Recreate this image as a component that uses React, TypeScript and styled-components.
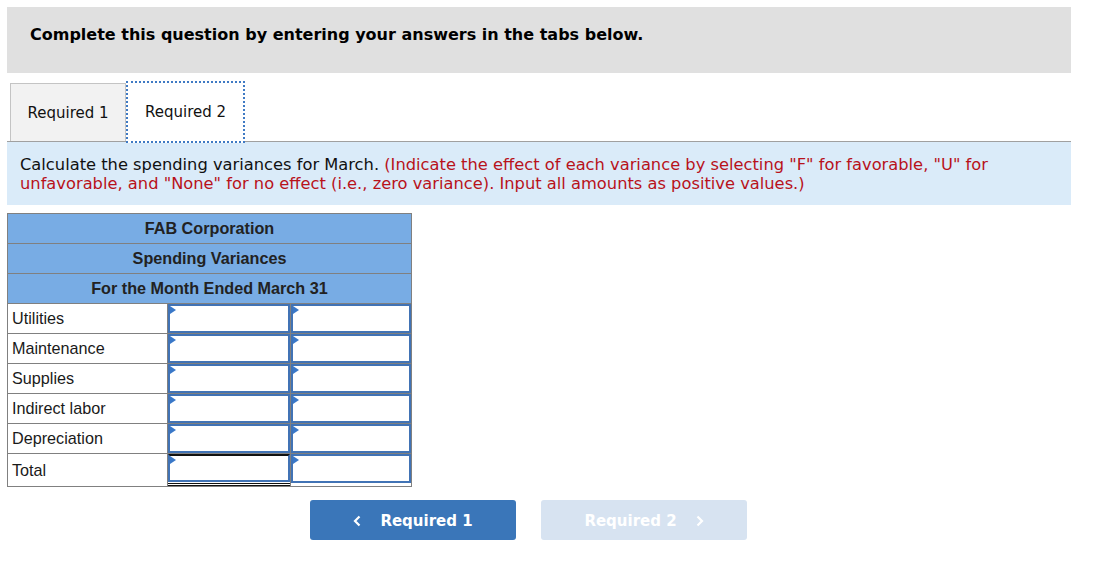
import React from "react";
import styled, { createGlobalStyle } from "styled-components";

const GlobalStyle = createGlobalStyle`
  body {
    margin: 0;
    background: #ffffff;
    font-family: "DejaVu Sans", Verdana, sans-serif;
  }
`;

const StyledPage = styled.div`
  width: 1064px;
  padding: 7px;
`;

const StyledBanner = styled.div`
  background: #e0e0e0;
  height: 66px;
  box-sizing: border-box;
  padding: 18px 0 0 23px;
  font-size: 16px;
  line-height: 20px;
  font-weight: bold;
  color: #000;
`;

const StyledTabBar = styled.div`
  display: flex;
  align-items: flex-end;
  height: 60px;
  margin-top: 8px;
  padding-left: 3px;
  border-bottom: 1px solid #a0a0a0;
`;

const StyledTab = styled.div<{ $active?: boolean }>`
  box-sizing: border-box;
  display: flex;
  align-items: center;
  justify-content: center;
  font-size: 15px;
  color: #111;
  background: ${({ $active }) => ($active ? "#ffffff" : "#f2f2f2")};
  border: ${({ $active }) =>
    $active ? "2px dotted #3f7ac4" : "1px solid #c4c4c4"};
  border-bottom: ${({ $active }) => ($active ? "2px dotted #3f7ac4" : "none")};
  width: ${({ $active }) => ($active ? "119px" : "116px")};
  height: ${({ $active }) => ($active ? "62px" : "58px")};
  margin-bottom: ${({ $active }) => ($active ? "-2px" : "0")};
  padding-top: ${({ $active }) => ($active ? "0" : "1px")};
`;

const StyledInstructions = styled.div`
  background: #daebf9;
  height: 63px;
  box-sizing: border-box;
  padding: 13px 80px 0 13px;
  font-size: 16.3px;
  line-height: 19px;
  color: #111;
`;

const StyledHint = styled.span`
  color: #b8121b;
`;

const StyledTable = styled.table`
  margin-top: 8px;
  width: 404px;
  border-collapse: collapse;
  table-layout: fixed;
  font-family: "Liberation Sans", Arial, sans-serif;
  font-size: 16.2px;
  color: #1a1a1a;
`;

const StyledHeaderCell = styled.th`
  background: #78ace4;
  border: 1px solid #808080;
  height: 29px;
  padding: 0;
  font-weight: bold;
  text-align: center;
  color: #222;
`;

const StyledRow = styled.tr<{ $total?: boolean }>`
  height: ${({ $total }) => ($total ? "33px" : "30px")};
`;

const StyledLabelCell = styled.td`
  border: 1px solid #808080;
  padding: 0 0 0 4px;
`;

const StyledInputCell = styled.td`
  border: 1px solid #808080;
  padding: 0;
  vertical-align: top;
`;

const StyledInputBox = styled.div<{ $total?: boolean }>`
  position: relative;
  box-sizing: border-box;
  height: ${({ $total }) => ($total ? "28px" : "29px")};
  border: 2px solid #4173b5;
  border-top: ${({ $total }) => ($total ? "2px solid #111" : "2px solid #4173b5")};
  box-shadow: ${({ $total }) =>
    $total ? "0 1px 0 #fff, 0 2px 0 #111, 0 3px 0 #fff, 0 4px 0 #111" : "none"};
  background: #fff;
`;

const StyledMarker = styled.span`
  position: absolute;
  top: 0;
  left: 0;
  width: 0;
  height: 0;
  border-top: 4px solid transparent;
  border-bottom: 4px solid transparent;
  border-left: 6px solid #3a78c8;
`;

const StyledNav = styled.div`
  display: flex;
  gap: 25px;
  margin-top: 13px;
  padding-left: 303px;
`;

const StyledNavButton = styled.button<{ $disabled?: boolean }>`
  width: 206px;
  height: 40px;
  border: none;
  border-radius: 3px;
  display: flex;
  align-items: center;
  justify-content: center;
  gap: 18px;
  padding-top: 2px;
  font-family: "DejaVu Sans", Verdana, sans-serif;
  font-size: 15px;
  font-weight: bold;
  color: #fff;
  background: ${({ $disabled }) => ($disabled ? "#d7e3f1" : "#3a76b9")};
`;

const Chevron = ({ dir }: { dir: "left" | "right" }) => (
  <svg width="9" height="12" viewBox="0 0 9 12" fill="none">
    <path
      d={dir === "left" ? "M6.5 1.5 L2 6 L6.5 10.5" : "M2.5 1.5 L7 6 L2.5 10.5"}
      stroke="#fff"
      strokeWidth="2.2"
    />
  </svg>
);

const rows = ["Utilities", "Maintenance", "Supplies", "Indirect labor", "Depreciation"];

const InputCell: React.FC<{ total?: boolean }> = ({ total }) => (
  <StyledInputCell>
    <StyledInputBox $total={total}>
      <StyledMarker />
    </StyledInputBox>
  </StyledInputCell>
);

const App: React.FC = () => {
  return (
    <StyledPage>
      <GlobalStyle />
      <StyledBanner>Complete this question by entering your answers in the tabs below.</StyledBanner>

      <StyledTabBar>
        <StyledTab>Required 1</StyledTab>
        <StyledTab $active>Required 2</StyledTab>
      </StyledTabBar>

      <StyledInstructions>
        Calculate the spending variances for March.{" "}
        <StyledHint>
          (Indicate the effect of each variance by selecting "F" for favorable, "U" for
          unfavorable, and "None" for no effect (i.e., zero variance). Input all amounts as
          positive values.)
        </StyledHint>
      </StyledInstructions>

      <StyledTable>
        <colgroup>
          <col style={{ width: 160 }} />
          <col style={{ width: 123 }} />
          <col style={{ width: 121 }} />
        </colgroup>
        <thead>
          <tr>
            <StyledHeaderCell colSpan={3}>FAB Corporation</StyledHeaderCell>
          </tr>
          <tr>
            <StyledHeaderCell colSpan={3}>Spending Variances</StyledHeaderCell>
          </tr>
          <tr>
            <StyledHeaderCell colSpan={3}>For the Month Ended March 31</StyledHeaderCell>
          </tr>
        </thead>
        <tbody>
          {rows.map((label) => (
            <StyledRow key={label}>
              <StyledLabelCell>{label}</StyledLabelCell>
              <InputCell />
              <InputCell />
            </StyledRow>
          ))}
          <StyledRow $total>
            <StyledLabelCell>Total</StyledLabelCell>
            <InputCell total />
            <InputCell />
          </StyledRow>
        </tbody>
      </StyledTable>

      <StyledNav>
        <StyledNavButton>
          <Chevron dir="left" />
          Required 1
        </StyledNavButton>
        <StyledNavButton $disabled>
          Required 2
          <Chevron dir="right" />
        </StyledNavButton>
      </StyledNav>
    </StyledPage>
  );
};

export default App;
